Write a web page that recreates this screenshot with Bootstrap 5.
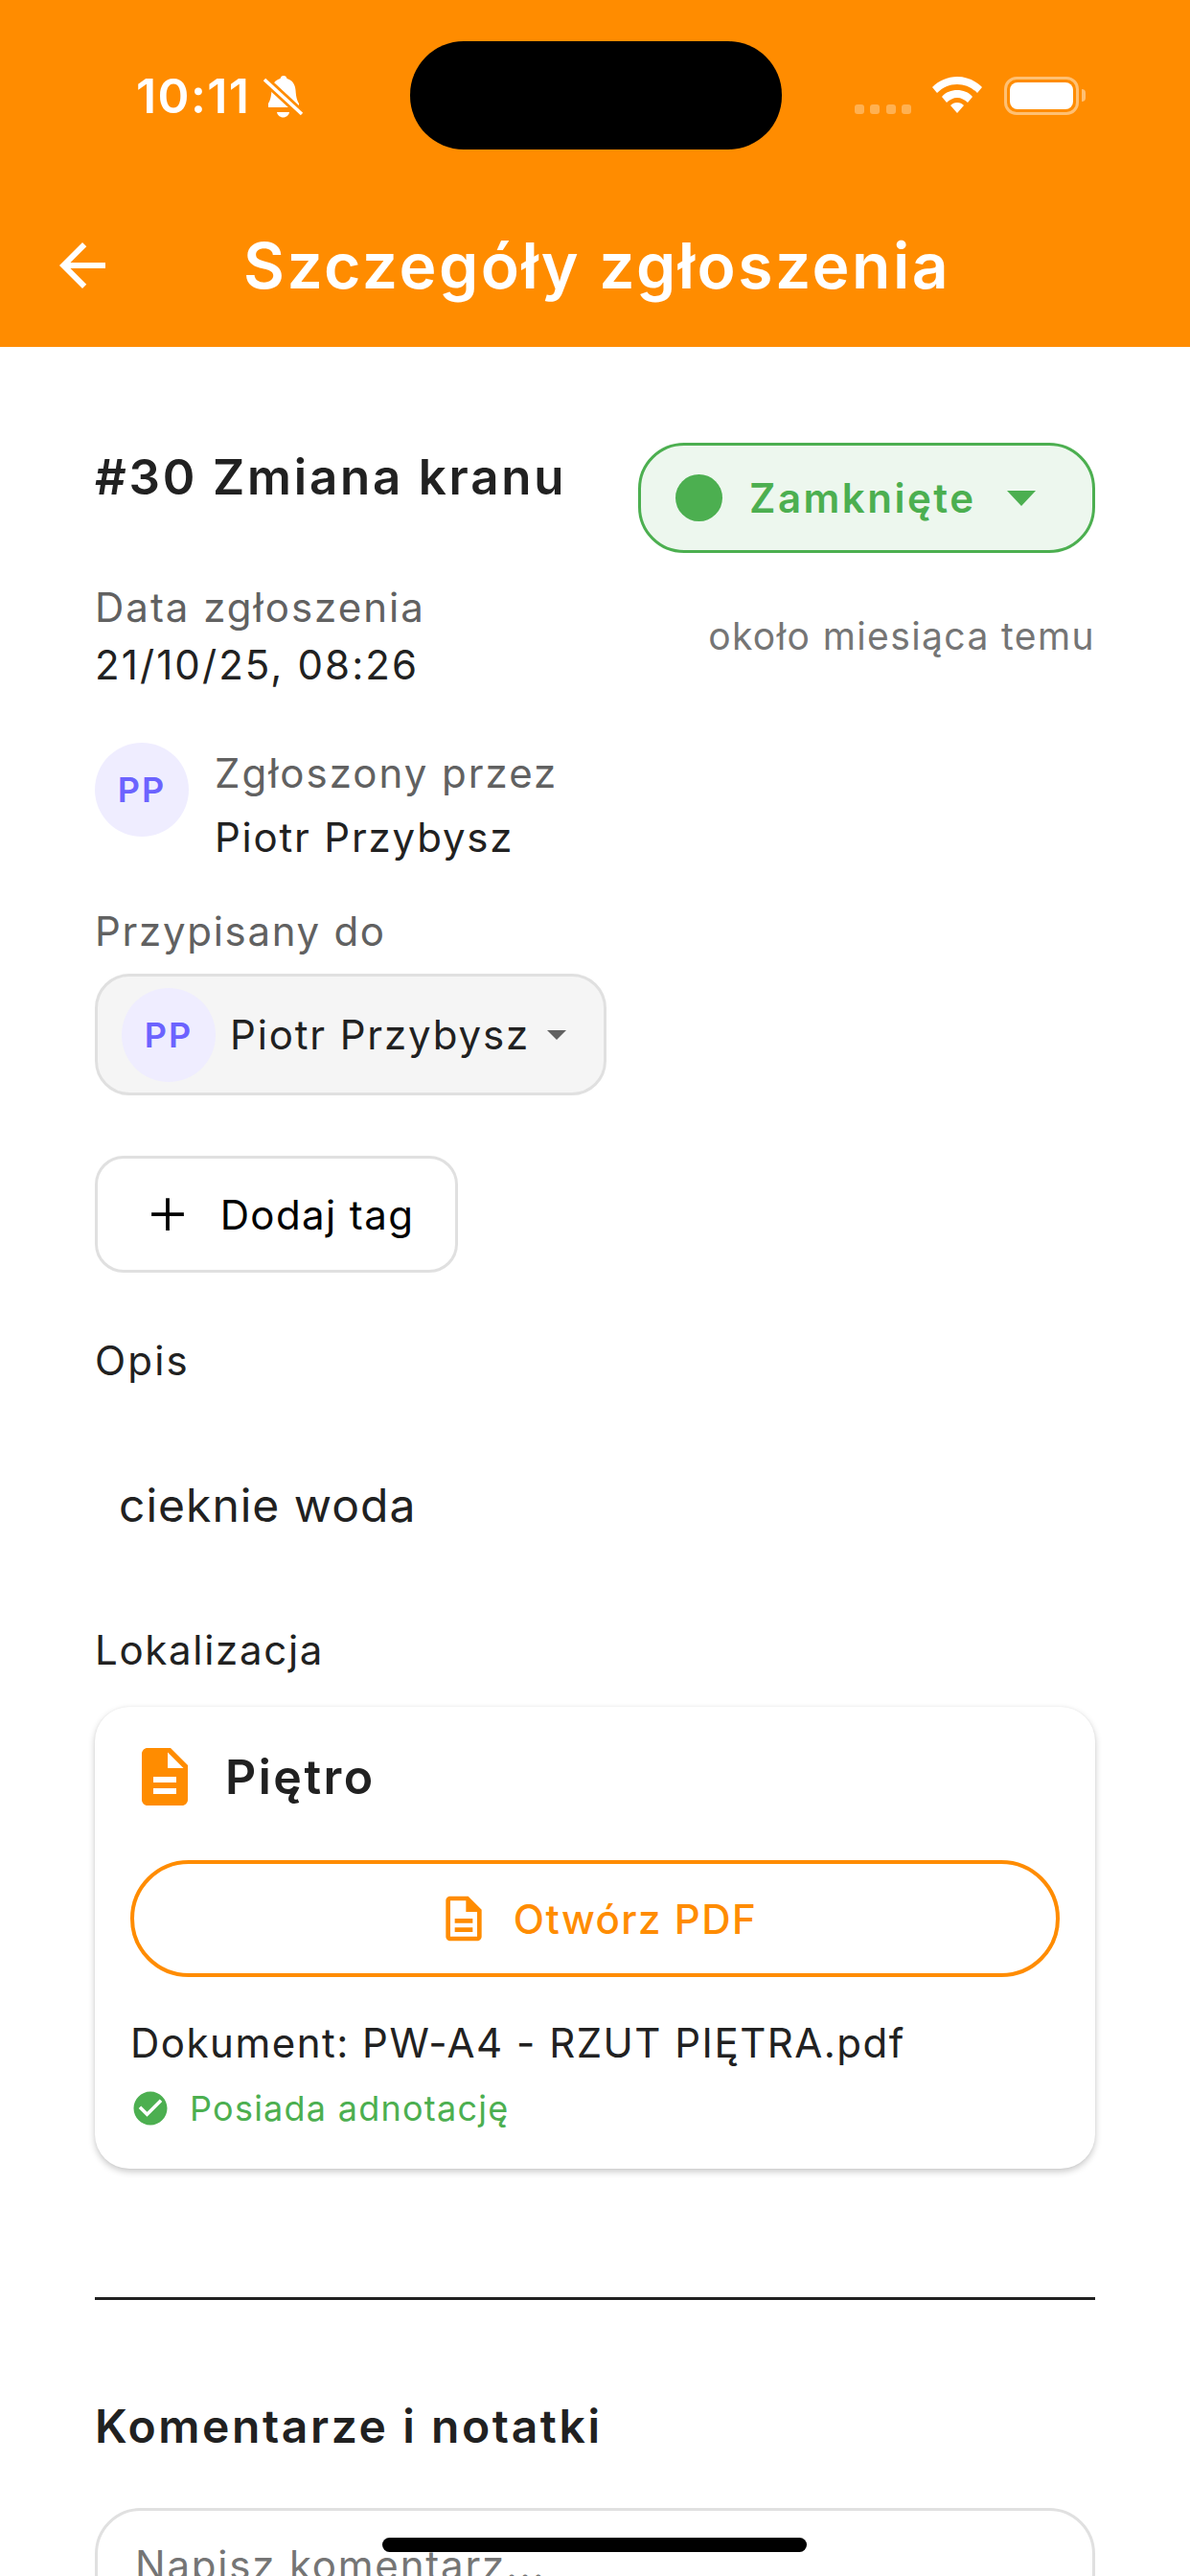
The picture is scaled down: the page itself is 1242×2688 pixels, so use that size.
<!DOCTYPE html>
<html lang="pl">
<head>
    <meta charset="UTF-8">
    <meta name="viewport" content="width=device-width, initial-scale=1.0">
    <title>Szczegóły zgłoszenia</title>
    <link href="https://cdn.jsdelivr.net/npm/bootstrap@5.3.3/dist/css/bootstrap.min.css" rel="stylesheet">
    <style>
        :root {
            --app-orange: #ff8c00;
            --app-green: #4caf50;
            --app-text: #212121;
            --app-muted: #616161;
            --app-line: #e0e0e0;
            --app-violet: #6c63ff;
        }

        html, body { height: 2688px; }

        body {
            font-family: Inter, "Noto Sans", sans-serif;
            color: var(--app-text);
            background: #fff;
            letter-spacing: 1.5px;
        }

        .app-shell { height: 2688px; overflow: hidden; position: relative; }

        /* Header */
        .app-header { height: 362px; background: var(--app-orange); color: #fff; position: relative; }
        .status-row { height: 200px; padding: 80px 109px 0 142px; }
        .status-time { font-size: 50px; line-height: 40px; font-weight: 600; letter-spacing: 1.4px; }
        .bell-icon { margin: -1px 0 0 14px; }
        .island { position: absolute; left: 428px; top: 43px; width: 388px; height: 113px; background: #000; border-radius: 56px; }
        .signal-dots { gap: 6.5px; margin-top: 29px; margin-right: 22px; }
        .signal-dots span { width: 10px; height: 10px; border-radius: 3px; background: rgba(255,255,255,.32); }
        .battery { width: 78px; height: 40px; border: 3px solid rgba(255,255,255,.45); border-radius: 13px; padding: 3px; margin-left: 23px; }
        .battery span { display: block; height: 100%; background: #fff; border-radius: 8px; }
        .battery-cap { width: 4px; height: 13px; margin: 13px 0 0 3px; background: rgba(255,255,255,.45); border-radius: 0 4px 4px 0; }
        .title-row { padding-left: 50px; height: 72px; margin-top: 41px; }
        .title-text { font-size: 66px; line-height: 72px; font-weight: 600; margin-left: 132px; letter-spacing: 2.5px; }

        /* Content */
        .content-area { padding: 0 99px 0 99px; }
        .issue-title { font-size: 51px; line-height: 70px; font-weight: 600; margin-top: 101px; letter-spacing: 2.8px; }
        .status-pill { width: 477px; height: 115px; margin-top: 100px; background: #edf7ee; border: 3px solid var(--app-green); border-radius: 48px; padding: 0 59px 0 36px; color: var(--app-green); font-size: 42px; font-weight: 600; letter-spacing: 2.5px; }
        .status-dot { width: 49px; height: 49px; border-radius: 50%; background: var(--app-green); margin-right: 28px; }
        .label-text { font-size: 42px; line-height: 60px; color: var(--app-muted); letter-spacing: 2px; }
        .value-text { font-size: 42px; line-height: 60px; letter-spacing: 2.1px; }
        .ago-text { font-size: 39px; color: #757575; letter-spacing: 1.4px; }
        .date-row { margin-top: 27px; }
        .reporter-row { margin-top: 49px; gap: 27px; }
        .person-dot { width: 98px; height: 98px; border-radius: 50%; background: #efedff; color: var(--app-violet); font-size: 36px; font-weight: 600; flex: none; letter-spacing: 2px; }
        .reporter-row .person-dot { margin-top: 2px; }
        .reporter-row .label-text, .reporter-row .value-text { line-height: 67px; }
        .reporter-row .value-text { letter-spacing: 1.8px; }
        .assign-label { margin-top: 35px; letter-spacing: 1.7px; }
        .assign-box { width: 534px; height: 127px; margin-top: 14px; background: #f5f5f5; border: 3px solid var(--app-line); border-radius: 36px; padding: 0 39px 0 25px; gap: 15px; font-size: 42px; letter-spacing: 1.85px; }
        .add-tag { width: 379px; height: 122px; margin-top: 63px; padding: 0; border: 3px solid var(--app-line); border-radius: 30px; background: #fff; color: #000; font-size: 42px; font-weight: 400; gap: 25px; letter-spacing: 1.4px; }
        .section-label { font-size: 42px; line-height: 60px; letter-spacing: 1.7px; }
        .opis-label { margin-top: 62px; letter-spacing: 2.2px; }
        .opis-text { font-size: 48px; line-height: 70px; margin-top: 86px; padding-left: 25px; letter-spacing: 1px; }
        .place-label { margin-top: 86px; }

        .place-card { height: 482px; margin-top: 29px; border: 0; border-radius: 36px; padding: 37px 37px 0; box-shadow: 0 3px 7px rgba(0,0,0,.22), 0 0 2px rgba(0,0,0,.06); }
        .place-name { font-size: 50px; line-height: 72px; font-weight: 600; gap: 27px; letter-spacing: 2.5px; }
        .pdf-btn { height: 122px; margin-top: 51px; border: 4px solid var(--app-orange); border-radius: 61px; background: #fff; color: var(--app-orange); font-size: 42px; font-weight: 500; gap: 24px; letter-spacing: 1.5px; padding: 0 0 0 4px; }
        .doc-name { font-size: 42px; line-height: 60px; margin-top: 39px; }
        .note-row { font-size: 36px; line-height: 50px; color: var(--app-green); margin-top: 13px; gap: 20px; letter-spacing: 1.25px; }

        .rule { margin: 134px 0 0; border: 0; border-top: 3px solid #212121; opacity: 1; }
        .comments-title { font-size: 48px; line-height: 70px; font-weight: 600; margin-top: 97px; letter-spacing: 2.6px; }
        .comment-box.form-control { height: 170px; margin-top: 50px; padding: 22px 39px; border: 3px solid var(--app-line); border-radius: 48px; font-size: 42px; line-height: 70px; letter-spacing: 1.8px; resize: none; }
        .comment-box::placeholder { color: #757575; }

        .home-bar { position: absolute; left: 399px; top: 2648px; width: 443px; height: 15px; background: #000; border-radius: 8px; }
    </style>
</head>
<body>
<div class="app-shell">
    <header class="app-header">
        <div class="island"></div>
        <div class="status-row d-flex align-items-start">
            <span class="status-time">10:11</span>
            <svg class="bell-icon" width="44" height="44" viewBox="0 0 44 44" fill="#fff"><path d="M21 0c2 0 3 1 3.500 3C30 4.500 33 9 33.500 15c.5 7 1.500 11 3.500 14v4H5v-4c2-3 3-7 3.500-14C9 9 12 4.500 17.500 3 18 1 19 0 21 0z"/><path d="M14 38h13c-.5 3-3 5.500-6.500 5.500S14.500 41 14 38z"/><path d="M0 3l40 37" stroke="#ff8c00" stroke-width="9"/><path d="M1 4l39 36" stroke="#fff" stroke-width="3.500"/></svg>
            <div class="d-flex ms-auto">
                <div class="signal-dots d-flex"><span></span><span></span><span></span><span></span></div>
                <svg width="52" height="38" viewBox="0 0 52 38" fill="#fff"><path d="M26 0c10 0 19 4 26 11l-5 6C41 11 34 8 26 8S11 11 5 17L0 11C7 4 16 0 26 0z"/><path d="M26 14c6 0 12 2 16 7l-5 6c-3-3-7-5-11-5s-8 2-11 5l-5-6c4-5 10-7 16-7z"/><path d="M26 27c3 0 5 1 7 3l-7 8-7-8c2-2 4-3 7-3z"/></svg>
                <div class="battery"><span></span></div>
                <div class="battery-cap"></div>
            </div>
        </div>
        <div class="title-row d-flex">
            <svg width="72" height="72" viewBox="0 0 24 24" fill="#fff"><path d="M20 11H7.830l5.590-5.590L12 4l-8 8 8 8 1.410-1.410L7.830 13H20v-2z"/></svg>
            <div class="title-text">Szczegóły zgłoszenia</div>
        </div>
    </header>

    <main class="content-area">
        <div class="d-flex justify-content-between align-items-start">
            <div class="issue-title">#30 Zmiana kranu</div>
            <div class="status-pill d-flex align-items-center">
                <span class="status-dot"></span>
                <span class="flex-grow-1">Zamknięte</span>
                <svg width="30" height="16" viewBox="0 0 30 16" fill="#4caf50"><path d="M0 0h30L15 16z"/></svg>
            </div>
        </div>

        <div class="date-row d-flex justify-content-between align-items-center">
            <div>
                <div class="label-text">Data zgłoszenia</div>
                <div class="value-text">21/10/25, 08:26</div>
            </div>
            <div class="ago-text">około miesiąca temu</div>
        </div>

        <div class="reporter-row d-flex align-items-start">
            <div class="person-dot d-flex align-items-center justify-content-center">PP</div>
            <div>
                <div class="label-text">Zgłoszony przez</div>
                <div class="value-text">Piotr Przybysz</div>
            </div>
        </div>

        <div class="label-text assign-label">Przypisany do</div>
        <div class="assign-box d-flex align-items-center">
            <div class="person-dot d-flex align-items-center justify-content-center">PP</div>
            <span class="flex-grow-1">Piotr Przybysz</span>
            <svg width="20" height="10" viewBox="0 0 20 10" fill="#616161"><path d="M0 0h20L10 10z"/></svg>
        </div>

        <button type="button" class="add-tag btn d-flex align-items-center justify-content-center">
            <svg width="60" height="60" viewBox="0 0 24 24" fill="#000"><path d="M18.750 12.750h-6v6h-1.500v-6h-6v-1.500h6v-6h1.500v6h6v1.500z"/></svg>
            <span>Dodaj tag</span>
        </button>

        <div class="section-label opis-label">Opis</div>
        <div class="opis-text">cieknie woda</div>

        <div class="section-label place-label">Lokalizacja</div>
        <div class="place-card card">
            <div class="place-name d-flex align-items-center">
                <svg width="72" height="72" viewBox="0 0 24 24" fill="#ff8c00"><path d="M14 2H6c-1.100 0-2 .9-2 2v16c0 1.100.9 2 2 2h12c1.100 0 2-.9 2-2V8l-6-6zm2 16H8v-2h8v2zm0-4H8v-2h8v2zm-3-5V3.500L18.500 9H13z"/></svg>
                <span>Piętro</span>
            </div>
            <button type="button" class="pdf-btn btn d-flex align-items-center justify-content-center">
                <svg width="56" height="56" viewBox="0 0 24 24" fill="#ff8c00"><path d="M14 2H6c-1.100 0-2 .9-2 2v16c0 1.100.9 2 2 2h12c1.100 0 2-.9 2-2V8l-6-6zm4 18H6V4h7v5h5v11zM8 12h8v2H8v-2zm0 4h8v2H8v-2z"/></svg>
                <span>Otwórz PDF</span>
            </button>
            <div class="doc-name">Dokument: PW-A4 - RZUT PIĘTRA.pdf</div>
            <div class="note-row d-flex align-items-center">
                <svg width="42" height="42" viewBox="0 0 24 24" fill="#4caf50"><path d="M12 2C6.480 2 2 6.480 2 12s4.480 10 10 10 10-4.480 10-10S17.520 2 12 2zm-2 15l-5-5 1.410-1.410L10 14.170l7.590-7.590L19 8l-9 9z"/></svg>
                <span>Posiada adnotację</span>
            </div>
        </div>

        <hr class="rule">
        <div class="comments-title">Komentarze i notatki</div>
        <textarea class="comment-box form-control" rows="1" placeholder="Napisz komentarz..."></textarea>
    </main>

    <div class="home-bar"></div>
</div>
<script src="https://cdn.jsdelivr.net/npm/bootstrap@5.3.3/dist/js/bootstrap.bundle.min.js"></script>
</body>
</html>
